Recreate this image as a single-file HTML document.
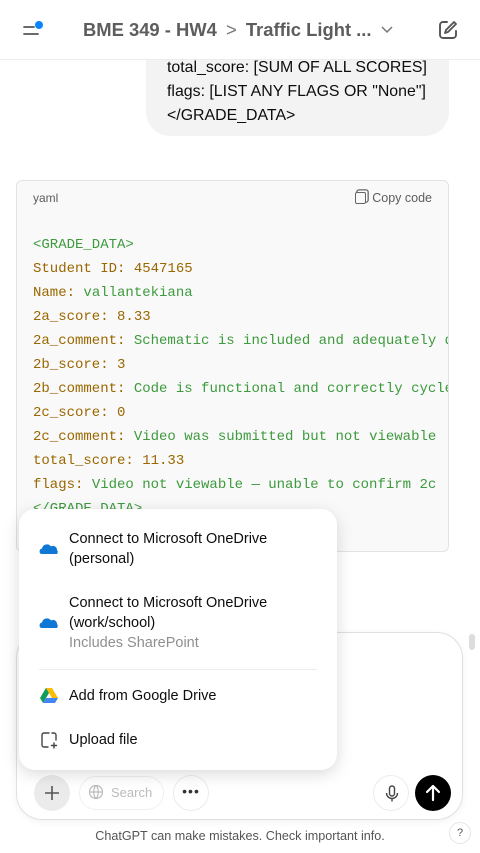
<!DOCTYPE html>
<html><head><meta charset="utf-8"><style>
*{box-sizing:border-box;margin:0;padding:0}
body{width:480px;height:853px;overflow:hidden;background:#fff;font-family:"Liberation Sans",sans-serif;position:relative;color:#0d0d0d}
.hdr{position:absolute;top:0;left:0;width:480px;height:60px;border-bottom:1px solid #ececec;background:#fff;z-index:2}
.bubble{position:absolute;left:146px;top:30px;width:303px;height:106px;background:#f3f3f3;border-radius:24px;padding:26px 0 0 21px;font-size:15.9px;line-height:24px}
.code{position:absolute;left:16px;top:180px;width:433px;height:372px;background:#f9f9f9;border:1px solid #e3e3e3;border-radius:6px;overflow:hidden}
.code pre{position:absolute;left:16px;top:52px;font-family:"Liberation Mono",monospace;font-size:14px;line-height:24px;white-space:pre;color:#9a6700}
.g{color:#3d9a3d}
.pop{position:absolute;left:19px;top:509px;width:318px;height:261px;background:#fff;border-radius:16px;box-shadow:0 4px 16px rgba(0,0,0,.15);z-index:5;font-size:14.5px;line-height:20px}
.it{position:absolute;left:50px}
.inp{position:absolute;left:16px;top:632px;width:447px;height:188px;border:1px solid #e0e0e0;border-radius:26px;box-shadow:0 2px 8px rgba(0,0,0,.05)}
.btn{position:absolute;width:36px;height:36px;border-radius:50%;border:1px solid #ececec}
</style></head><body>
<div class="hdr">
<svg style="position:absolute;left:22px;top:20px" width="24" height="20"><line x1="2" y1="7" x2="12" y2="7" stroke="#555" stroke-width="1.8" stroke-linecap="round"/><line x1="2" y1="14" x2="16" y2="14" stroke="#555" stroke-width="1.8" stroke-linecap="round"/><circle cx="17" cy="5" r="4" fill="#0a84ff"/></svg>
<div style="position:absolute;left:83px;top:19px;font-size:18.4px;font-weight:bold;color:#5d5d5d">BME 349 - HW4 <span style="font-weight:normal;color:#777;margin:0 4px">&gt;</span> Traffic Light ...</div>
<svg style="position:absolute;left:380px;top:24px" width="14" height="12"><path d="M2 3l5 5 5-5" stroke="#777" stroke-width="1.5" fill="none"/></svg>
<svg style="position:absolute;left:437px;top:19px" width="22" height="22" viewBox="0 0 22 22" fill="none" stroke="#555" stroke-width="1.9" stroke-linecap="round" stroke-linejoin="round"><path d="M10 3H6a3 3 0 0 0-3 3v10a3 3 0 0 0 3 3h10a3 3 0 0 0 3-3v-4"/><path d="M17 3l2 2-8 8-3 1 1-3z"/></svg>
</div>
<div class="bubble">total_score: [SUM OF ALL SCORES]<br>flags: [LIST ANY FLAGS OR "None"]<br>&lt;/GRADE_DATA&gt;</div>
<div class="code">
<div style="position:absolute;left:16px;top:10px;font-size:12px;color:#5d5d5d">yaml</div>
<div style="position:absolute;right:16px;top:10px;font-size:12.5px;color:#5d5d5d"><span style="display:inline-block;width:11px;height:12px;border:1.3px solid #666;border-radius:2px;margin-right:6px;vertical-align:-2px;box-shadow:2px -2px 0 -0.5px #fff,2px -2px 0 0.8px #666"></span>Copy code</div>
<pre><span class="g">&lt;GRADE_DATA&gt;</span>
Student ID: 4547165
Name: <span class="g">vallantekiana</span>
2a_score: 8.33
2a_comment: <span class="g">Schematic is included and adequately d</span>
2b_score: 3
2b_comment: <span class="g">Code is functional and correctly cycle</span>
2c_score: 0
2c_comment: <span class="g">Video was submitted but not viewable</span>
total_score: 11.33
flags: <span class="g">Video not viewable — unable to confirm 2c</span>
<span class="g">&lt;/GRADE_DATA&gt;</span></pre>
</div>
<div class="inp"></div>
<div style="position:absolute;left:469px;top:634px;width:6px;height:16px;border-radius:3px;background:#ddd"></div>
<div class="pop">
<svg style="position:absolute;left:20px;top:34px" width="20" height="12"><path d="M2 11a3 3 0 0 1 1-5.5 5 5 0 0 1 9-2 4 4 0 0 1 6 3.5 3 3 0 0 1 0 4z" fill="#0f78d4"/></svg>
<div class="it" style="top:20px">Connect to Microsoft OneDrive<br>(personal)</div>
<svg style="position:absolute;left:20px;top:108px" width="20" height="12"><path d="M2 11a3 3 0 0 1 1-5.5 5 5 0 0 1 9-2 4 4 0 0 1 6 3.5 3 3 0 0 1 0 4z" fill="#0f78d4"/></svg>
<div class="it" style="top:84px">Connect to Microsoft OneDrive<br>(work/school)<br><span style="color:#8f8f8f">Includes SharePoint</span></div>
<div style="position:absolute;left:20px;top:160px;width:278px;height:1px;background:#ececec"></div>
<svg style="position:absolute;left:21px;top:179px" width="18" height="16" viewBox="0 0 18 16"><path d="M6 0h6l6 10h-6z" fill="#fbbc04"/><path d="M6 0L0 10l3 5 6-10z" fill="#0f9d58"/><path d="M3 15h12l3-5H6z" fill="#4285f4"/></svg>
<div class="it" style="top:177px">Add from Google Drive</div>
<svg style="position:absolute;left:21px;top:222px" width="18" height="18" viewBox="0 0 18 18" fill="none" stroke="#444" stroke-width="1.4" stroke-linecap="round"><path d="M9 2H4a2 2 0 0 0-2 2v10a2 2 0 0 0 2 2h4M12 2h2a2 2 0 0 1 2 2v5M14 12v5M11.5 14.5h5"/></svg>
<div class="it" style="top:221px">Upload file</div>
</div>
<div class="btn" style="left:34px;top:775px;background:#ebebeb;border:none"><svg width="36" height="36"><path d="M18 11v14M11 18h14" stroke="#555" stroke-width="1.6"/></svg></div>
<div style="position:absolute;left:79px;top:776px;width:85px;height:34px;border:1px solid #f0f0f0;border-radius:17px;color:#bbb;font-size:13px;padding:8px 0 0 31px">Search</div>
<svg style="position:absolute;left:88px;top:784px" width="16" height="16" fill="none" stroke="#bbb" stroke-width="1.2"><circle cx="8" cy="8" r="6.5"/><path d="M1.5 8h13M8 1.5c-3 3-3 10 0 13M8 1.5c3 3 3 10 0 13"/></svg>
<div class="btn" style="left:173px;top:775px;text-align:center;line-height:30px;font-size:14px;color:#333;letter-spacing:1px">•••</div>
<div class="btn" style="left:373px;top:775px"><svg width="36" height="36" fill="none" stroke="#444" stroke-width="1.4"><rect x="15.5" y="10" width="5" height="10" rx="2.5"/><path d="M12.5 17a5.5 5.5 0 0 0 11 0M18 22.5v3"/></svg></div>
<div class="btn" style="left:415px;top:775px;background:#000;border:none"><svg width="36" height="36" fill="none" stroke="#fff" stroke-width="2.2" stroke-linecap="round" stroke-linejoin="round"><path d="M18 25V11M12 17l6-6 6 6"/></svg></div>
<div style="position:absolute;left:0;width:480px;top:829px;text-align:center;font-size:12.6px;color:#555">ChatGPT can make mistakes. Check important info.</div>
<div style="position:absolute;left:449px;top:822px;width:22px;height:22px;border:1px solid #e5e5e5;border-radius:50%;font-size:11px;text-align:center;line-height:20px;color:#555">?</div>
</body></html>
